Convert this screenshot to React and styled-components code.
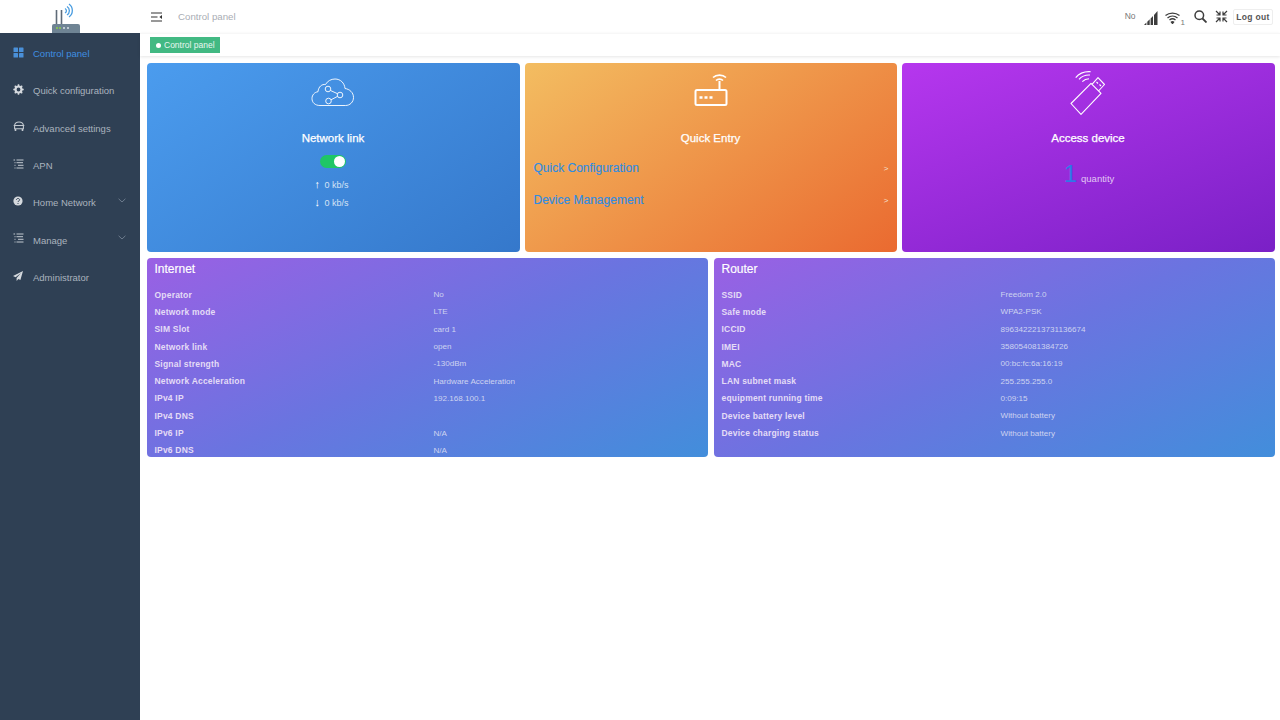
import React from 'react';
import styled, { createGlobalStyle } from 'styled-components';

const internetRows = [
  ['Operator', 'No'],
  ['Network mode', 'LTE'],
  ['SIM Slot', 'card 1'],
  ['Network link', 'open'],
  ['Signal strength', '-130dBm'],
  ['Network Acceleration', 'Hardware Acceleration'],
  ['IPv4 IP', '192.168.100.1'],
  ['IPv4 DNS', ''],
  ['IPv6 IP', 'N/A'],
  ['IPv6 DNS', 'N/A'],
];

const routerRows = [
  ['SSID', 'Freedom 2.0'],
  ['Safe mode', 'WPA2-PSK'],
  ['ICCID', '8963422213731136674'],
  ['IMEI', '358054081384726'],
  ['MAC', '00:bc:fc:6a:16:19'],
  ['LAN subnet mask', '255.255.255.0'],
  ['equipment running time', '0:09:15'],
  ['Device battery level', 'Without battery'],
  ['Device charging status', 'Without battery'],
];

const GridIcon = () => (
  <svg width="11" height="11" viewBox="0 0 11 11" fill="#4a90d9">
    <rect x="0.5" y="0.5" width="4.5" height="4.5" rx="0.6" />
    <rect x="6" y="0.5" width="4.5" height="4.5" rx="0.6" />
    <rect x="0.5" y="6" width="4.5" height="4.5" rx="0.6" />
    <rect x="6" y="6" width="4.5" height="4.5" rx="0.6" />
  </svg>
);

const GearIcon = () => (
  <svg width="11" height="11" viewBox="0 0 11 11">
    <circle cx="5.5" cy="5.5" r="3" fill="none" stroke="#d5d9de" strokeWidth="2.2" />
    <path
      d="M5.5 0.3v2M5.5 8.7v2M0.3 5.5h2M8.7 5.5h2M1.8 1.8l1.4 1.4M7.8 7.8l1.4 1.4M9.2 1.8L7.8 3.2M3.2 7.8L1.8 9.2"
      stroke="#d5d9de"
      strokeWidth="1.5"
    />
  </svg>
);

const CarIcon = () => (
  <svg width="12" height="11" viewBox="0 0 12 11" fill="none" stroke="#c3c9d0" strokeWidth="1.1">
    <path d="M1.5 4.5C2 1.6 4 1 6 1s4 .6 4.5 3.5" />
    <path d="M0.7 4.5h10.6M1.6 4.5v3.3h8.8V4.5" />
    <path d="M2.5 8v2M9.5 8v2" strokeWidth="1.6" />
  </svg>
);

const ListIcon = () => (
  <svg width="11" height="11" viewBox="0 0 11 11" stroke="#c3c9d0" strokeWidth="1">
    <path d="M0.5 1h1.6M3.5 1h7M3.5 3.7h6.5M5 6.3h5.5M3.5 9h7M1.5 3.7h1M1.5 6.3h1M1.5 9h1" />
  </svg>
);

const HelpIcon = () => (
  <svg width="10" height="10" viewBox="0 0 10 10">
    <circle cx="5" cy="5" r="4.6" fill="#d5d9de" />
    <path d="M3.4 3.9C3.5 2.9 4.2 2.5 5 2.5c.9 0 1.6.5 1.6 1.3 0 1.2-1.6 1.1-1.6 2.2" fill="none" stroke="#2f4054" strokeWidth="1" />
    <circle cx="5" cy="7.5" r="0.6" fill="#2f4054" />
  </svg>
);

const PlaneIcon = () => (
  <svg width="10" height="10" viewBox="0 0 10 10" fill="#d5d9de">
    <path d="M10 0L0 5l2.6 1.3L8 2 3.6 7v3l1.8-2.1 2 1z" />
  </svg>
);

const Chevron = () => (
  <svg width="8" height="5" viewBox="0 0 8 5" fill="none" stroke="#7e8b9c" strokeWidth="0.8">
    <path d="M0.6 0.8L4 4l3.4-3.2" />
  </svg>
);

const RouterLogo = () => (
  <svg width="30" height="31" viewBox="0 0 30 31" fill="none">
    <path d="M5.5 8v14M10.5 8v14" stroke="#5f6b78" strokeWidth="1.6" />
    <path d="M1 31v-7a2 2 0 0 1 2-2h24a2 2 0 0 1 2 2v7z" fill="#6f8494" />
    <circle cx="6" cy="26" r="1" fill="#8bd14a" />
    <circle cx="9" cy="26" r="1" fill="#8bd14a" />
    <circle cx="13" cy="26" r="1" fill="#d9e2e8" />
    <circle cx="17" cy="26" r="1" fill="#d9e2e8" />
    <path d="M14 6.5a2.5 2.5 0 0 1 0 4.5" stroke="#4a9de0" strokeWidth="1.3" />
    <path d="M16 4.500a5 5 0 0 1 0 8.500" stroke="#4a9de0" strokeWidth="1.3" />
    <path d="M18 2a8 8 0 0 1 0 13" stroke="#4a9de0" strokeWidth="1.3" />
  </svg>
);

const CloudIcon = () => (
  <svg width="44" height="30" viewBox="0 0 44 30" fill="none" stroke="#fff" strokeWidth="1" strokeOpacity="0.9">
    <path d="M9 27.5C4 27.5 1 24.5 1 20.5c0-3.6 2.6-6.3 6-6.8C7.5 8.5 11 6 14.5 6.5 16.5 3 20 1 24 1c5.5 0 9.5 4 10 9.5 4.500.6 8.500 4 8.500 9 0 4.500-3.500 8-8 8z" />
    <circle cx="17" cy="11" r="2.8" />
    <circle cx="29" cy="17" r="2.8" />
    <circle cx="17.5" cy="23" r="2.8" />
    <path d="M19.5 12.5l7 3.2M26.5 18.4l-6.5 3.4" />
  </svg>
);

const WifiRouterIcon = () => (
  <svg width="34" height="32" viewBox="0 0 34 32" fill="none" stroke="#fff">
    <rect x="1.5" y="16" width="31" height="15" rx="1.5" strokeWidth="2" />
    <path d="M25.5 16V7" strokeWidth="2" />
    <path d="M22 6.500c1.900-1.900 5.100-1.900 7 0" strokeWidth="1.7" />
    <path d="M19 3.500c3.500-3.300 9.500-3.300 13 0" strokeWidth="1.7" />
    <path d="M5.5 23.500h3M10.500 23.500h3M15.500 23.500h3" strokeWidth="2.6" />
  </svg>
);

const UsbIcon = () => (
  <svg width="38" height="46" viewBox="0 0 38 46" fill="none" stroke="#fff" strokeWidth="1.1" strokeLinejoin="round">
    <path d="M2 34.500L22 14.300l10 10-20 21z" />
    <path d="M23 15.300L29 8.700 35.500 15.500 29.500 22" />
    <path d="M27.500 13l1.500 1.500M30.500 15.500l1.500 1.500" />
    <path d="M6.700 8.700C10 4.500 15.500 2.300 21.700 2.700" />
    <path d="M10 10.300C12.500 7.500 16.500 5.700 21 6" />
    <path d="M13.300 12.700C15 11 17.500 9.800 20 9.700" />
  </svg>
);

const SignalIcon = () => (
  <svg width="14" height="14" viewBox="0 0 14 14" fill="#3d3d3d">
    <path d="M0 14l2.400-2.400V14zM3.300 14v-3.300l2.400-2.400V14zM6.600 14V7.400L9 5v9zM10 14V4l3.500-4v14z" />
  </svg>
);

const WifiIcon = () => (
  <svg width="15" height="12" viewBox="0 0 15 12" fill="none" stroke="#3d3d3d" strokeWidth="1.3">
    <path d="M0.5 3.600c4-3.300 10-3.300 14 0" />
    <path d="M2.500 5.900c2.900-2.400 7.100-2.400 10 0" />
    <path d="M4.500 8c1.700-1.400 4.300-1.400 6 0" />
    <path d="M6.400 10.100c.6-.5 1.600-.5 2.200 0L7.500 11.500z" fill="#3d3d3d" />
  </svg>
);

const SearchIcon = () => (
  <svg width="13" height="13" viewBox="0 0 13 13" fill="none" stroke="#3d3d3d" strokeWidth="1.5">
    <circle cx="5.3" cy="5.3" r="4.3" />
    <path d="M8.500 8.500L12.500 12.500" strokeWidth="1.8" />
  </svg>
);

const CompressIcon = () => (
  <svg width="13" height="13" viewBox="0 0 13 13" fill="none" stroke="#3d3d3d" strokeWidth="1.2">
    <path d="M1 1l3.500 3.500M1.500 5h3.500V1.500" />
    <path d="M12 1L8.500 4.500M11.500 5H8V1.500" />
    <path d="M1 12l3.500-3.500M1.500 8h3.500v3.500" />
    <path d="M12 12L8.500 8.500M11.500 8H8v3.500" />
  </svg>
);

const MenuIcon = () => (
  <svg width="11" height="10" viewBox="0 0 11 10" stroke="#333" strokeWidth="1.1">
    <path d="M0 1h11M0 5h6.500M0 9h11" />
    <path d="M11 3L8.400 5 11 7z" fill="#333" stroke="none" />
  </svg>
);

const menu = [
  { label: 'Control panel', icon: <GridIcon />, active: true },
  { label: 'Quick configuration', icon: <GearIcon /> },
  { label: 'Advanced settings', icon: <CarIcon /> },
  { label: 'APN', icon: <ListIcon /> },
  { label: 'Home Network', icon: <HelpIcon />, more: true },
  { label: 'Manage', icon: <ListIcon />, more: true },
  { label: 'Administrator', icon: <PlaneIcon /> },
];

export default function App() {
  return (
    <Page>
      <GlobalStyle />
      <Side>
        <LogoBox>
          <RouterLogo />
        </LogoBox>
        <Nav>
          {menu.map((item) => (
            <NavItem key={item.label} $active={item.active}>
              <NavIcon>{item.icon}</NavIcon>
              <span>{item.label}</span>
              {item.more && (
                <NavMore>
                  <Chevron />
                </NavMore>
              )}
            </NavItem>
          ))}
        </Nav>
      </Side>
      <Main>
        <TopBar>
          <MenuIcon />
          <Crumb>Control panel</Crumb>
          <TopRight>
            <TopText>No</TopText>
            <TopIcon $y={3}>
              <SignalIcon />
            </TopIcon>
            <WifiWrap>
              <WifiIcon />
              <WifiCount>1</WifiCount>
            </WifiWrap>
            <SearchIcon />
            <CompressIcon />
            <LogoutButton>Log out</LogoutButton>
          </TopRight>
        </TopBar>
        <TagBar>
          <Tag>
            <TagDot />
            Control panel
          </Tag>
        </TagBar>
        <Content>
          <CardRow>
            <Card $bg="linear-gradient(145deg, #4b9cee, #3578cb)">
              <IconSlot>
                <CloudIcon />
              </IconSlot>
              <CardTitle>Network link</CardTitle>
              <Toggle />
              <Speed>
                <Arrow>↑</Arrow> 0 kb/s
              </Speed>
              <Speed>
                <Arrow>↓</Arrow> 0 kb/s
              </Speed>
            </Card>
            <Card $bg="linear-gradient(145deg, #f3bd61, #ea6a30)">
              <IconSlot $lift={6}>
                <WifiRouterIcon />
              </IconSlot>
              <CardTitle>Quick Entry</CardTitle>
              <EntryList>
                <EntryRow>
                  <EntryLink>Quick Configuration</EntryLink>
                  <EntryArrow>&gt;</EntryArrow>
                </EntryRow>
                <EntryRow>
                  <EntryLink>Device Management</EntryLink>
                  <EntryArrow>&gt;</EntryArrow>
                </EntryRow>
              </EntryList>
            </Card>
            <Card $bg="linear-gradient(160deg, #b637ee, #7a20c6)">
              <IconSlot $lift={3}>
                <UsbIcon />
              </IconSlot>
              <CardTitle>Access device</CardTitle>
              <Quantity>
                <QuantityNum>1</QuantityNum>
                <span>quantity</span>
              </Quantity>
            </Card>
          </CardRow>
          <InfoRow>
            <InfoCard title="Internet" rows={internetRows} />
            <InfoCard title="Router" rows={routerRows} />
          </InfoRow>
        </Content>
      </Main>
    </Page>
  );
}

function InfoCard({ title, rows }) {
  return (
    <Info>
      <InfoTitle>{title}</InfoTitle>
      {rows.map(([name, value]) => (
        <InfoLine key={name}>
          <InfoName>{name}</InfoName>
          <InfoValue>{value}</InfoValue>
        </InfoLine>
      ))}
    </Info>
  );
}

const GlobalStyle = createGlobalStyle`
  html, body {
    margin: 0;
    height: 100%;
    background: #fff;
    font-family: "Liberation Sans", Arial, sans-serif;
    overflow: hidden;
  }
  * { box-sizing: border-box; }
`;

const Page = styled.div`
  display: flex;
  width: 1280px;
  height: 720px;
`;

const Side = styled.aside`
  width: 140px;
  flex-shrink: 0;
  display: flex;
  flex-direction: column;
`;

const LogoBox = styled.div`
  height: 33px;
  background: #fff;
  overflow: hidden;
  display: flex;
  justify-content: center;
  padding: 2px 8px 0 0;
`;

const Nav = styled.nav`
  flex: 1;
  background: #2f4054;
  padding-top: 2px;
`;

const NavItem = styled.div`
  display: flex;
  align-items: center;
  height: 37.3px;
  padding-left: 13px;
  font-size: 9.5px;
  color: ${(p) => (p.$active ? '#3f8fe0' : '#aab3be')};
`;

const NavIcon = styled.span`
  width: 20px;
  display: flex;
  align-items: center;
  margin-top: -3px;
`;

const NavMore = styled.span`
  margin-left: auto;
  margin-right: 14px;
  margin-top: -5px;
  display: flex;
`;

const Main = styled.main`
  flex: 1;
  min-width: 0;
  display: flex;
  flex-direction: column;
`;

const TopBar = styled.header`
  height: 33px;
  display: flex;
  align-items: center;
  padding: 0 7px 0 11px;
  flex-shrink: 0;
`;

const Crumb = styled.span`
  margin-left: 16px;
  font-size: 9.7px;
  color: #a9adb4;
  margin-top: -1px;
`;

const TopRight = styled.div`
  margin-left: auto;
  display: flex;
  align-items: center;
  gap: 8px;
`;

const TopText = styled.span`
  font-size: 8.5px;
  color: #777;
  margin-top: -1px;
`;

const TopIcon = styled.span`
  display: flex;
  margin-top: ${(p) => p.$y}px;
`;

const WifiWrap = styled.span`
  display: flex;
  align-items: flex-end;
  gap: 1px;
  margin: 3px 1px 0 -1px;
`;

const WifiCount = styled.span`
  font-size: 8px;
  color: #777;
  margin-bottom: -3px;
`;

const LogoutButton = styled.button`
  height: 16px;
  width: 40px;
  padding: 0;
  margin-left: -3px;
  border: 1px solid #eee;
  border-radius: 2px;
  background: #fff;
  color: #555;
  font-family: "Liberation Sans", Arial, sans-serif;
  font-size: 8.5px;
  font-weight: 700;
  letter-spacing: 0.3px;
`;

const TagBar = styled.div`
  height: 23px;
  padding: 3px 0 0 10px;
  border-top: 1px solid #f7f7f7;
  box-shadow: 0 1px 3px rgba(0, 0, 0, 0.1);
  flex-shrink: 0;
`;

const Tag = styled.div`
  width: 70px;
  height: 16px;
  background: #42b983;
  color: #e9f6f0;
  font-size: 8.5px;
  display: flex;
  align-items: center;
  padding-left: 6px;
  gap: 3px;
`;

const TagDot = styled.i`
  width: 5px;
  height: 5px;
  border-radius: 50%;
  background: #fff;
`;

const Content = styled.div`
  padding: 7px 5px 0 6.5px;
  display: flex;
  flex-direction: column;
  gap: 6px;
`;

const CardRow = styled.div`
  display: grid;
  grid-template-columns: 373px 372px 373px;
  gap: 5px;
`;

const Card = styled.section`
  height: 189px;
  border-radius: 4px;
  background: ${(p) => p.$bg};
  color: #fff;
  display: flex;
  flex-direction: column;
  align-items: center;
`;

const IconSlot = styled.div`
  height: 50px;
  margin-top: 5px;
  padding-bottom: ${(p) => p.$lift || 0}px;
  display: flex;
  align-items: center;
  justify-content: center;
`;

const CardTitle = styled.h3`
  margin: 14px 0 0;
  font-size: 11.5px;
  line-height: 13px;
  font-weight: 400;
  -webkit-text-stroke: 0.25px #fff;
`;

const Toggle = styled.div`
  position: relative;
  width: 26px;
  height: 13px;
  margin-top: 10px;
  margin-bottom: 7px;
  border-radius: 7px;
  background: #1fc665;
  &::after {
    content: '';
    position: absolute;
    right: 1px;
    top: 1px;
    width: 11px;
    height: 11px;
    border-radius: 50%;
    background: #fff;
  }
`;

const Speed = styled.div`
  height: 18px;
  font-size: 9px;
  line-height: 18px;
  color: #d5e3f5;
  margin-left: -3px;
`;

const Arrow = styled.span`
  font-size: 11px;
  margin-right: 2px;
  color: #fff;
`;

const EntryList = styled.div`
  width: 100%;
  padding: 7px 8px 0 9px;
`;

const EntryRow = styled.div`
  display: flex;
  justify-content: space-between;
  align-items: center;
  height: 32px;
`;

const EntryLink = styled.span`
  font-size: 12px;
  color: #2f8de0;
  -webkit-text-stroke: 0.15px #2f8de0;
`;

const EntryArrow = styled.span`
  font-size: 8px;
  color: #f4e3d4;
`;

const Quantity = styled.div`
  display: flex;
  align-items: baseline;
  gap: 4px;
  margin-top: 13px;
  margin-left: 2px;
  font-size: 9.5px;
  color: #e1c7f4;
`;

const QuantityNum = styled.span`
  font-size: 24px;
  line-height: 32px;
  color: #2f78e8;
`;

const InfoRow = styled.div`
  display: grid;
  grid-template-columns: 561px 561px;
  gap: 6px;
`;

const Info = styled.section`
  height: 199px;
  overflow: hidden;
  border-radius: 4px;
  padding: 0 8px;
  background: linear-gradient(155deg, #9a60e4, #6a74e0 50%, #428edb);
  color: #fff;
`;

const InfoTitle = styled.h3`
  margin: 0;
  padding-top: 4px;
  height: 28px;
  font-size: 12px;
  line-height: 14px;
  font-weight: 400;
  -webkit-text-stroke: 0.15px #fff;
`;

const InfoLine = styled.div`
  display: flex;
  align-items: center;
  height: 17.3px;
`;

const InfoName = styled.span`
  width: 279px;
  flex-shrink: 0;
  font-size: 8.5px;
  font-weight: 700;
  letter-spacing: 0.2px;
  color: #e4dcf6;
`;

const InfoValue = styled.span`
  font-size: 8.1px;
  color: #cdd3f0;
`;
